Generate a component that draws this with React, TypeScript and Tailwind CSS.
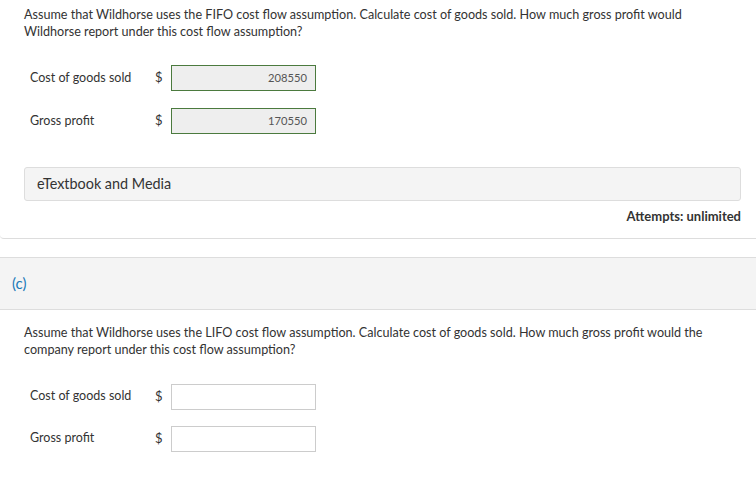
import React from 'react'

const FONT = "font-['Lato','Liberation_Sans',sans-serif]"

function AnswerRow({ label, value }: { label: string; value?: string }) {
  const filled = value !== undefined
  return (
    <div className="flex h-[26px] items-center">
      <span className="w-[125px] pl-[30px] text-[12.5px] text-[#333] box-content">{label}</span>
      <span className="w-[16px] text-[13px] text-[#333]">$</span>
      <div
        className={`flex h-[26px] w-[145px] items-center justify-end border pr-2 text-[11.2px] text-[#555] ${
          filled ? 'border-[#4b7a3e] bg-[#eeeeee]' : 'border-[#cccccc] bg-white'
        }`}
      >
        {value}
      </div>
    </div>
  )
}

export default function App() {
  return (
    <div className={`${FONT} h-[484px] w-[756px] overflow-hidden bg-white text-[#333]`}>
      {/* part (b) card */}
      <div className="rounded-bl-sm border-b border-[#dddddd] pb-[11px]">
        <p className="px-[24px] pt-[6px] text-[12.6px] leading-[17px]">
          Assume that Wildhorse uses the FIFO cost flow assumption. Calculate cost of goods sold. How much gross profit would
          Wildhorse report under this cost flow assumption?
        </p>
        <div className="mt-[25px] flex flex-col gap-[17px]">
          <AnswerRow label="Cost of goods sold" value="208550" />
          <AnswerRow label="Gross profit" value="170550" />
        </div>
        <div className="ml-[24px] mr-[15px] mt-[33px] flex h-[34px] items-center rounded-[3px] border border-[#dddddd] bg-[#f4f4f4] pl-[12px] text-[14.4px]">
          eTextbook and Media
        </div>
        <div className="mt-[6px] pr-[15px] text-right text-[13px] font-bold">Attempts: unlimited</div>
      </div>

      {/* part (c) header */}
      <div className="mt-[18px] flex h-[53px] items-center border-y border-[#dddddd] bg-[#f4f4f4] pl-[12px] text-[15px] text-[#1a7ab8]">
        (c)
      </div>

      <p className="px-[24px] pt-[14px] text-[12.6px] leading-[17px]">
        Assume that Wildhorse uses the LIFO cost flow assumption. Calculate cost of goods sold. How much gross profit would the
        company report under this cost flow assumption?
      </p>
      <div className="mt-[26px] flex flex-col gap-[16px]">
        <AnswerRow label="Cost of goods sold" />
        <AnswerRow label="Gross profit" />
      </div>
    </div>
  )
}
